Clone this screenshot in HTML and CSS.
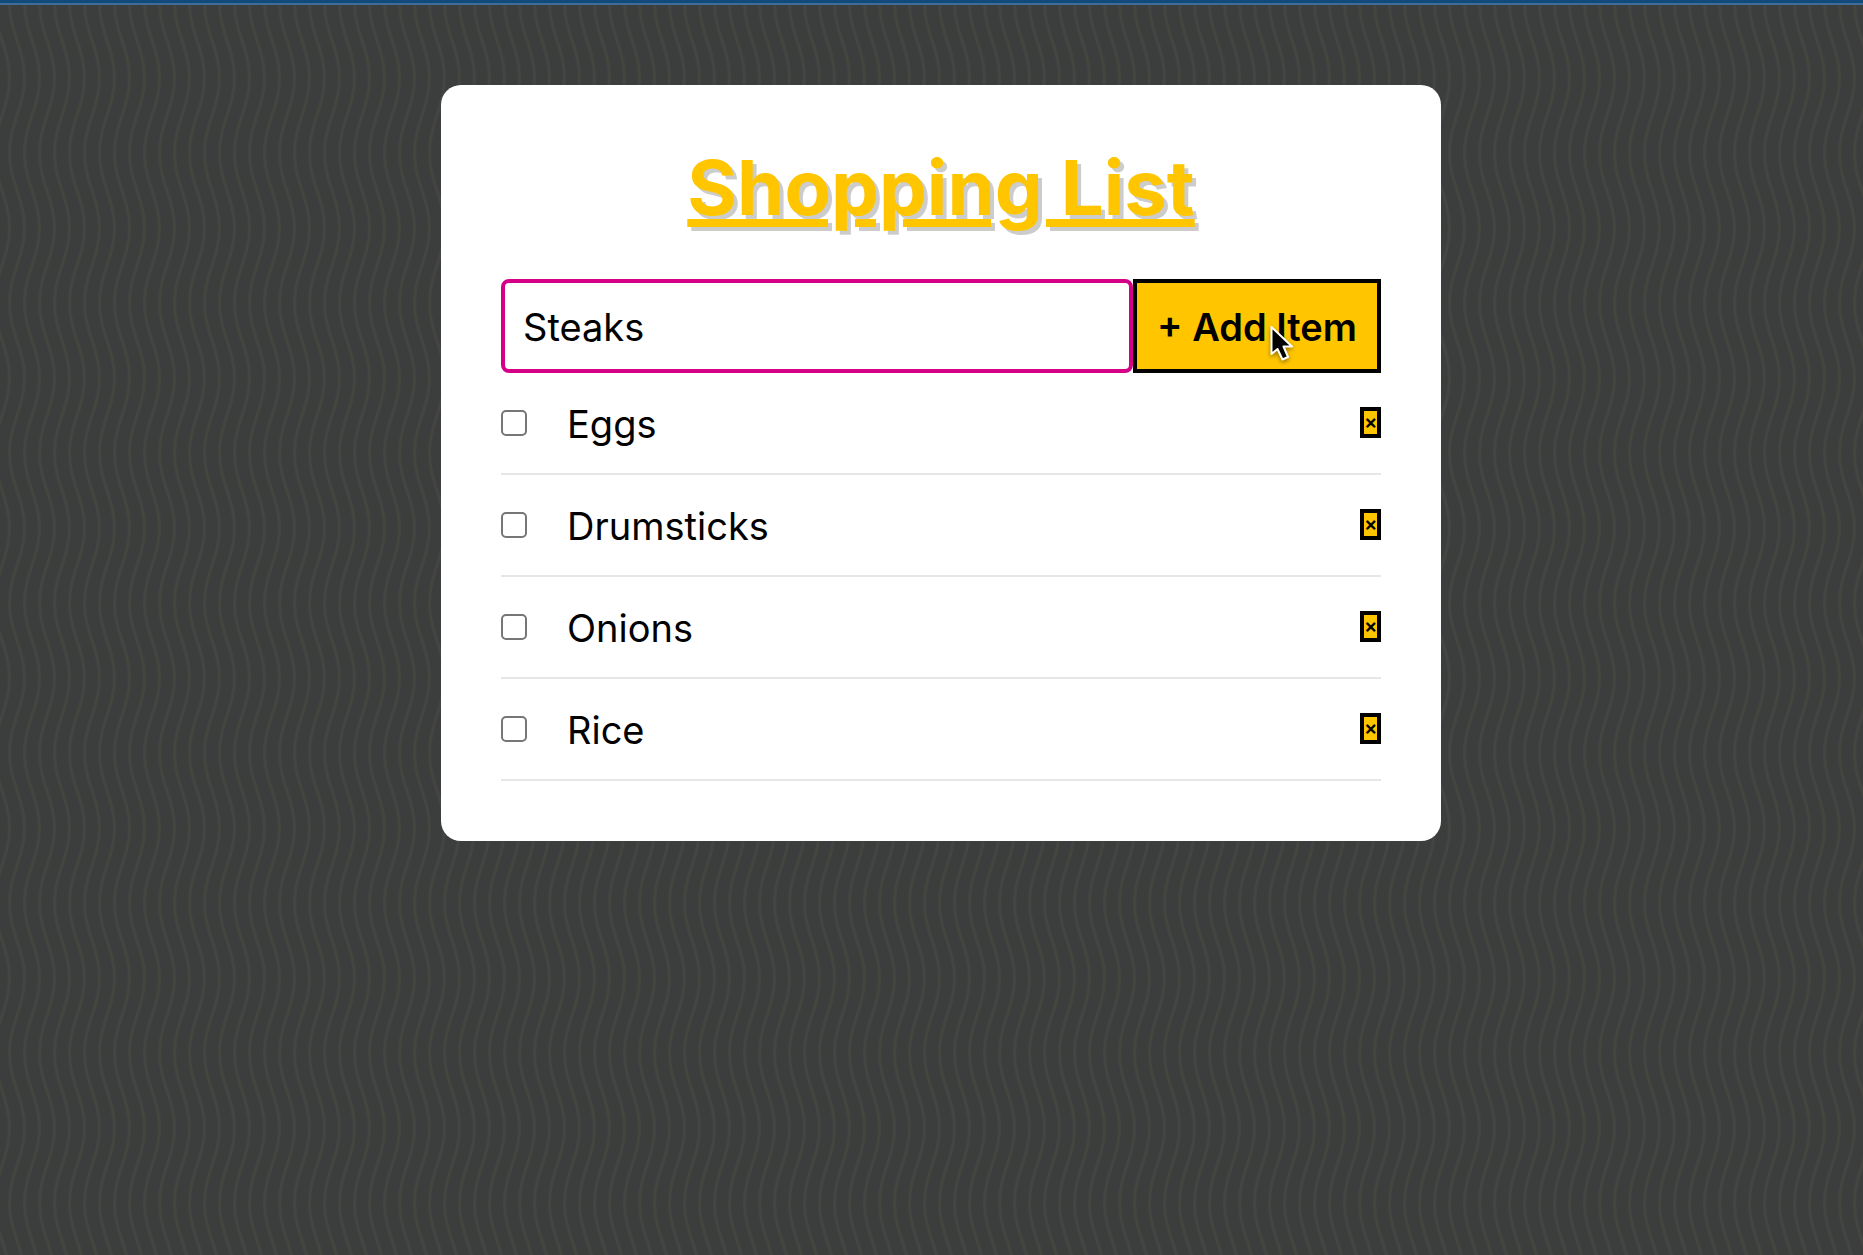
FILE: index.html
```html
<!DOCTYPE html>
<html lang="en">
<head>
<meta charset="utf-8">
<meta name="viewport" content="width=device-width, initial-scale=1">
<title>Shopping List</title>
<link rel="stylesheet" href="styles.css">
</head>
<body>
<main class="page">
  <section class="shopping">
    <h1 class="title">Shopping List</h1>
    <form class="shopping-form" onsubmit="return false">
      <input class="item-input" type="text" name="item" value="Steaks" aria-label="Item name" autocomplete="off" spellcheck="false">
      <button class="add-button" type="submit">+ Add Item
        <svg class="cursor" viewBox="0 0 24 38" aria-hidden="true">
          <path d="M1.500 2v27l6-5 5 10.500 5.500-2.500-4.500-10.500h8.500z" fill="#000" stroke="#fff" stroke-width="2" stroke-linejoin="round"/>
        </svg>
      </button>
    </form>
    <ul class="list">
      <li class="item"><input class="check" type="checkbox" id="eggs"><label class="name" for="eggs">Eggs</label><button class="remove" type="button" aria-label="Remove Eggs">×</button></li>
      <li class="item"><input class="check" type="checkbox" id="drumsticks"><label class="name" for="drumsticks">Drumsticks</label><button class="remove" type="button" aria-label="Remove Drumsticks">×</button></li>
      <li class="item"><input class="check" type="checkbox" id="onions"><label class="name" for="onions">Onions</label><button class="remove" type="button" aria-label="Remove Onions">×</button></li>
      <li class="item"><input class="check" type="checkbox" id="rice"><label class="name" for="rice">Rice</label><button class="remove" type="button" aria-label="Remove Rice">×</button></li>
    </ul>
  </section>
</main>
</body>
</html>
```
FILE: styles.css
```css
:root {
  --yellow: #ffc600;
  --black: #000;
  --pink: #d60087;
}

* {
  box-sizing: border-box;
}

body {
  margin: 0;
  min-height: 100vh;
  border-top: 3px solid #124a7b;
  background-color: #3c3e3d;
  background-image: url("data:image/svg+xml,%3Csvg xmlns='http://www.w3.org/2000/svg' width='300' height='150'%3E%3Cdefs%3E%3Cpattern id='w' width='15' height='150' patternUnits='userSpaceOnUse'%3E%3Cpath d='M-5.5 0C-5.5 29 9.5 46 9.5 75C9.5 104 -5.5 121 -5.5 150M9.5 0C9.5 29 24.5 46 24.5 75C24.5 104 9.5 121 9.5 150' fill='none' stroke='%23444541' stroke-width='3'/%3E%3C/pattern%3E%3C/defs%3E%3Crect width='300' height='150' fill='url(%23w)'/%3E%3C/svg%3E");
  background-position: 0 3px;
  font-family: Inter, "Liberation Sans", sans-serif;
  font-size: 38px;
  color: var(--black);
}

.page {
  border-top: 2px solid #3f6d98;
  padding: 80px 0 80px 19px;
}

.shopping {
  max-width: 1000px;
  margin: 0 auto;
  padding: 60px;
  border-radius: 20px;
  background: #fff;
}

.title {
  margin: 0 0 50px;
  font-size: 76px;
  font-weight: 700;
  line-height: 84px;
  text-align: center;
  color: var(--yellow);
  text-decoration: underline;
  text-decoration-thickness: 8px;
  text-underline-offset: 4px;
  text-shadow: 4px 4px 0 rgba(0, 0, 0, 0.2);
}

.shopping-form {
  display: flex;
}

.item-input {
  flex: 1;
  min-width: 0;
  height: 94px;
  padding: 2px 18px 0;
  border: 4px solid var(--pink);
  border-radius: 8px;
  outline: 0;
  background: #fff;
  font: inherit;
  color: inherit;
}

.add-button {
  position: relative;
  flex: 0 0 248px;
  padding: 2px 0 0;
  border: 4px solid var(--black);
  background: var(--yellow);
  font: inherit;
  font-weight: 600;
  color: inherit;
  white-space: nowrap;
}

.cursor {
  position: absolute;
  top: 42px;
  left: 133px;
  width: 24px;
  height: 38px;
  filter: drop-shadow(0 2px 2px rgba(0, 0, 0, 0.4));
}

.list {
  margin: 0;
  padding: 0;
  list-style: none;
}

.item {
  display: flex;
  align-items: center;
  padding: 20px 0;
  border-bottom: 2px solid #e6e6e6;
}

.check {
  appearance: none;
  width: 26px;
  height: 26px;
  margin: 0 38px 0 0;
  border: 2px solid #767676;
  border-radius: 5px;
  background: #fff;
}

.name {
  flex: 1;
  padding: 2px 0 0 2px;
  line-height: 58px;
}

.remove {
  width: 21px;
  height: 31px;
  margin: 0 0 2px;
  padding: 0;
  border: 4px solid var(--black);
  background: var(--yellow);
  font: inherit;
  font-size: 20px;
  font-weight: 600;
  line-height: 23px;
  color: inherit;
}
```
